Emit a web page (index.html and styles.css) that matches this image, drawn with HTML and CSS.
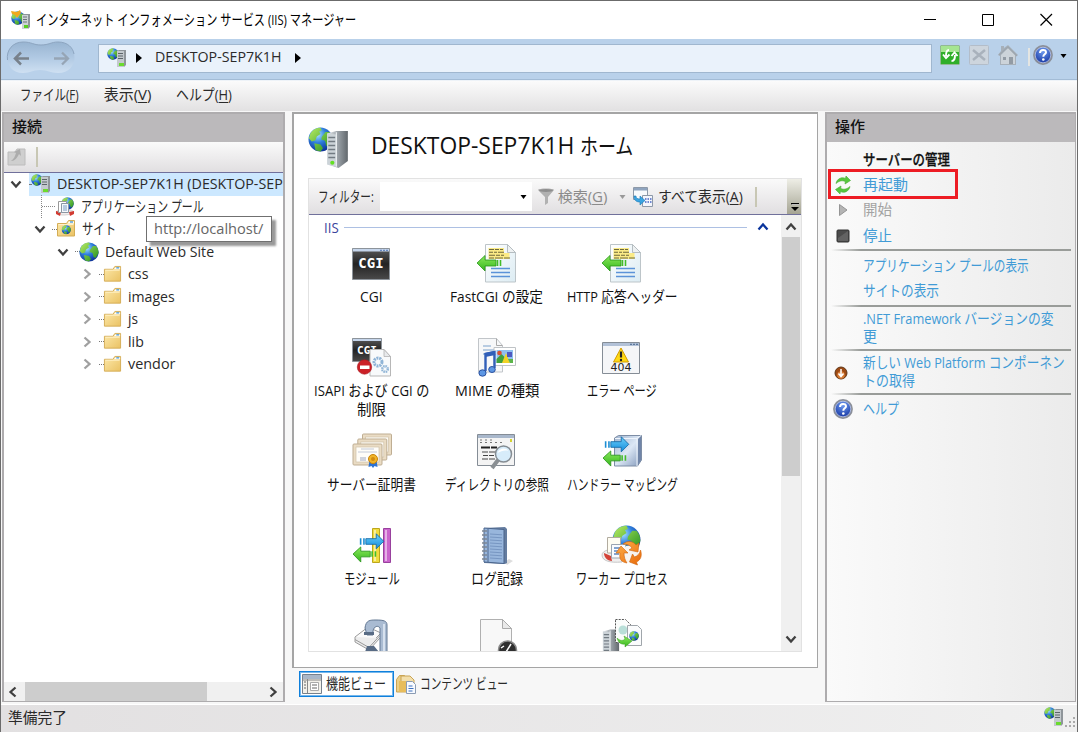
FILE: index.html
```html
<!DOCTYPE html>
<html lang="ja">
<head>
<meta charset="utf-8">
<title>インターネット インフォメーション サービス (IIS) マネージャー</title>
<link rel="stylesheet" href="styles.css">
</head>
<body>
<svg class="defs" width="0" height="0">
  <defs>
    <radialGradient id="sea" cx=".38" cy=".3" r=".75"><stop offset="0" stop-color="#a9e4ff"/><stop offset=".45" stop-color="#2f7fdc"/><stop offset="1" stop-color="#0b2c92"/></radialGradient>
    <linearGradient id="land" x1="0" y1="0" x2="1" y2="1"><stop offset="0" stop-color="#b9ec63"/><stop offset="1" stop-color="#1d8d1d"/></linearGradient>
    <linearGradient id="steel"><stop offset="0" stop-color="#e9edf0"/><stop offset=".5" stop-color="#9ca3a9"/><stop offset="1" stop-color="#62686d"/></linearGradient>
    <linearGradient id="dark" x1="0" y1="0" x2="0" y2="1"><stop offset="0" stop-color="#5a5a5a"/><stop offset=".5" stop-color="#232323"/><stop offset="1" stop-color="#4a4a4a"/></linearGradient>
    <linearGradient id="paper" x1="0" y1="0" x2="1" y2="1"><stop offset="0" stop-color="#fff"/><stop offset="1" stop-color="#dcecf3"/></linearGradient>
    <linearGradient id="fold" x1="0" y1="0" x2="1" y2="1"><stop offset="0" stop-color="#fde9ab"/><stop offset="1" stop-color="#eac263"/></linearGradient>
    <linearGradient id="grn" x1="0" y1="0" x2="0" y2="1"><stop offset="0" stop-color="#8bea5c"/><stop offset="1" stop-color="#35b51d"/></linearGradient>
    <linearGradient id="blu" x1="0" y1="0" x2="0" y2="1"><stop offset="0" stop-color="#6cd0fa"/><stop offset="1" stop-color="#128bdc"/></linearGradient>
    <linearGradient id="cube" x1="0" y1="0" x2="1" y2="1"><stop offset="0" stop-color="#9fb4cf"/><stop offset=".5" stop-color="#dce7f5"/><stop offset="1" stop-color="#8198ba"/></linearGradient>
    <linearGradient id="org" x1="0" y1="0" x2="1" y2="1"><stop offset="0" stop-color="#ffb24a"/><stop offset="1" stop-color="#e8680a"/></linearGradient>
    <radialGradient id="helpfill" cx=".5" cy=".3" r=".7"><stop offset="0" stop-color="#6f9cf0"/><stop offset="1" stop-color="#10309e"/></radialGradient>
    <symbol id="globe" viewBox="0 0 20 20">
      <circle cx="10" cy="10" r="9.6" fill="url(#sea)"/>
      <path d="M2 5C4 2 7 .6 10 .6l1 2-2 1 1 2-3 2-1 3-3 1L.7 9zM11 8l3-4 3 0 2 3 .6 4-3 5-2-1-1-4-3-1zM5 13l5 1 2 3-2 2.5-4-1z" fill="url(#land)"/>
    </symbol>
    <symbol id="tower" viewBox="0 0 20 32">
      <path d="M1 2L9 0h10v26l-8 6-10-3z" fill="url(#steel)"/>
      <path d="M1 2l8 1v28l-8-2z" fill="#ccd3d8"/>
      <path d="M2 5.5h6M2 9h6M2 12.500h6M2 16h6M2 19.500h6M2 23h6" stroke="#727b82" stroke-width="1.300"/>
      <path d="M9 1v30" stroke="#eef1f3"/><circle cx="5.500" cy="27.500" r="1.800" fill="#63e021"/>
    </symbol>
    <symbol id="server" viewBox="0 0 20 20">
      <use href="#globe" x="0" y="0" width="12" height="12"/>
      <path d="M10 3l2-1h7v15l-2 2h-7z" fill="#8f959a"/><path d="M10 3h7v16h-7z" fill="#c3c9cd"/>
      <path d="M11 5.500h5M11 8h5M11 10.500h5" stroke="#5c646a"/><path d="M12 15h5v3h-5z" fill="#6adb2e"/>
    </symbol>
    <symbol id="folder" viewBox="0 0 20 20">
      <path d="M1.500 4.500h9l2-3h6v15.500h-17z" fill="url(#fold)" stroke="#d4ad56"/>
      <path d="M11.500 4.500l1.500-2h5v2z" fill="#fff"/><path d="M14 3h3" stroke="#4d9bd8" stroke-width="1.400"/><path d="M2.500 5.500h15" stroke="#fff1c7"/>
    </symbol>
    <symbol id="help" viewBox="0 0 20 20">
      <circle cx="10" cy="10" r="9" fill="url(#helpfill)" stroke="#8b8f99" stroke-width="1.800"/><circle cx="10" cy="10" r="7.800" fill="none" stroke="#d7ddec" stroke-width=".7"/>
      <path d="M7 8c0-4 6-4 6-.8 0 2.200-2.700 2-2.700 4.500" fill="none" stroke="#fff" stroke-width="2"/><circle cx="10.300" cy="14.500" r="1.300" fill="#fff"/>
    </symbol>
    <symbol id="down" viewBox="0 0 12 12"><path d="M1.500 3.500L6 8.500l4.500-5" fill="none" stroke="currentColor" stroke-width="2.300"/></symbol>
    <symbol id="header-page" viewBox="0 0 40 40">
      <path d="M8.500.5h22l8 8v29.500h-30z" fill="url(#paper)" stroke="#bdc5c9"/><path d="M30.500.5v8h8z" fill="#eef1f2" stroke="#b5bdc1"/>
      <path d="M11.500 4h15.500v5h5.500v6h-21z" fill="#fbeb86"/>
      <path d="M12 5.500h5m1 0h4m1 0h3M12 8.300h4m1 0h3m1 0h6M12 11.200h6m1 0h4m1 0h3M12 14h5m1 0h8m1 0h6" stroke="#6f6a3c" stroke-width="1.100"/>
      <path d="M14 24.500h19M14 28.500h19M14 32.500h19" stroke="#5b93d8" stroke-width="1.400"/>
      <path d="M0 19l8-7.500V16h11v6H8v5z" fill="url(#grn)" stroke="#28951a" stroke-width=".8"/><path d="M20.500 16v6M23.500 16v6" stroke="#43bd28" stroke-width="1.600"/>
    </symbol>
    <symbol id="arrow-blue" viewBox="0 0 28 18"><path d="M8 6h11V.8l8 8-8 8V12H8z" fill="url(#blu)" stroke="#1268a5" stroke-width=".9"/><path d="M2.500 5.500v7M6 5.500v7" stroke="#1c8ed4" stroke-width="1.700"/></symbol>
    <symbol id="arrow-green" viewBox="0 0 28 18"><path d="M.8 8.500L9 1v4.500h10v6H9V17z" fill="url(#grn)" stroke="#28951a" stroke-width=".9"/><path d="M21 5.500v6M24.500 5.500v6" stroke="#43bd28" stroke-width="1.700"/></symbol>
    <symbol id="cert" viewBox="0 0 32 24"><rect x="1" y="1" width="29" height="21" rx="1" fill="#eadcc4" stroke="#bfae93"/><rect x="4" y="4" width="23" height="15" fill="#fffdf8" stroke="#cfc1a8" stroke-width=".7"/></symbol>
  </defs>
</svg>

<div class="window">
  <header class="titlebar">
    <svg class="i20" viewBox="0 0 20 20"><use href="#globe" x="0" y="1" width="14" height="14"/><path d="M0 1l6 1 3-2 1 3-4 5-2-3-3-1z" fill="#f0a91e"/><path d="M11 5l2-1h6v13l-2 2h-6z" fill="#8f959a"/><path d="M11 5h6v14h-6z" fill="#cdd2d5"/><path d="M12 7h4M12 9.500h4M12 12h4" stroke="#6c747a"/><path d="M13 15h4v3h-4z" fill="#58cf23"/></svg>
    <span class="fit caption" data-w="320">インターネット インフォメーション サービス (IIS) マネージャー</span>
    <div class="winbtns">
      <svg viewBox="0 0 58 38"><path d="M23 18.500h12" stroke="#000"/></svg>
      <svg viewBox="0 0 58 38"><path d="M23.500 13.500h11v11h-11z" fill="none" stroke="#000"/></svg>
      <svg viewBox="0 0 58 38"><path d="M23.500 13l11.500 11.500M35 13L23.500 24.500" stroke="#000" stroke-width="1.200"/></svg>
    </div>
  </header>

  <nav class="navbar">
    <svg class="backfwd" viewBox="0 0 70 36">
      <defs><linearGradient id="pill" x1="0" y1="0" x2="0" y2="1"><stop offset="0" stop-color="#98b4d1"/><stop offset=".5" stop-color="#b0c9e3"/><stop offset="1" stop-color="#cfe0f2"/></linearGradient></defs>
      <path d="M17 2c9 0 10 3 18 3S45 2 52 2c22 0 22 31 0 31-8 0-10-3-18-3s-9 3-17 3C-4 33-4 2 17 2z" fill="url(#pill)"/>
      <path d="M1.500 20C0 10 7 2 17 2c9 0 10 3 18 3S45 2 52 2c10 0 15 6 16 12" fill="none" stroke="#8da5c0"/>
      <path d="M23 18.500H9M15 12.500l-6 6 6 6" fill="none" stroke="#78818b" stroke-width="2.500"/>
      <path d="M48 18.500h14M56 12.500l6 6-6 6" fill="none" stroke="#96a5b5" stroke-width="2.300"/>
    </svg>
    <div class="address">
      <svg class="i20"><use href="#server"/></svg>
      <svg class="tri" viewBox="0 0 6 10"><path d="M0 0l6 5-6 5z"/></svg>
      <span class="fit" data-w="126">DESKTOP-SEP7K1H</span>
      <svg class="tri" viewBox="0 0 6 10"><path d="M0 0l6 5-6 5z"/></svg>
    </div>
    <div class="navicons">
      <svg class="i20" viewBox="0 0 20 20"><rect x=".5" y=".5" width="19" height="19" rx="1" fill="#2fae29" stroke="#93b893"/><path d="M1 1h18v6H1z" fill="#a5e591"/><path d="M9 5C6.500 5 6 7 6 11M3 9.500l3 3.500 3.500-3.500M11.500 16c3 0 3.500-2.500 3.500-6M11.500 11l3-3.500 3 3.500" fill="none" stroke="#fff" stroke-width="1.900"/></svg>
      <svg class="i20" viewBox="0 0 20 20"><rect x=".5" y=".5" width="19" height="19" rx="1" fill="#cdd5dd" stroke="#b3bdc9"/><path d="M4 5l12 10M16 5L4 15" stroke="#a9b2bc" stroke-width="2.500"/></svg>
      <svg class="i20" viewBox="0 0 20 20"><path d="M3 6V1h3v2l4-3 10 10-2 1v9H2v-9l-2-1z" fill="#a7b0b9"/><path d="M3 10l7-7 7 7v9H3z" fill="#ccd3d9"/><path d="M1 10l9-8 9 9" fill="none" stroke="#9da6af" stroke-width="1.400"/><path d="M11 12h4v7h-4zM5 12h3v3H5z" fill="#929ba4"/></svg>
      <i class="navsep"></i>
      <svg class="i20"><use href="#help"/></svg>
      <svg class="tri-down" viewBox="0 0 6 4"><path d="M0 0h6L3 4z"/></svg>
    </div>
  </nav>

  <nav class="menubar">
    <span class="fit" data-w="59">ファイル(<u>F</u>)</span><span class="fit" data-w="48">表示(<u>V</u>)</span><span class="fit" data-w="56">ヘルプ(<u>H</u>)</span>
  </nav>

  <main class="body">
    <section class="pane connections">
      <h2 class="pane-head"><span class="fit" data-w="30">接続</span></h2>
      <div class="tree-tools">
        <svg class="i20" viewBox="0 0 20 20"><path d="M1 5h7l2-3h8v16H1z" fill="#cfcfcf" stroke="#bcbcbc"/><path d="M4 14c3-2 4-5 5-8L7 5l6-3 1 7-2-2c-2 4-4 7-8 7z" fill="#acacac"/></svg>
        <i class="toolsep"></i>
      </div>
      <div class="tree">
        <div class="row l0"><svg class="chev"><use href="#down"/></svg><div class="sel"><i class="dots"></i><svg class="i20"><use href="#server"/></svg><span class="fit" data-w="226">DESKTOP-SEP7K1H (DESKTOP-SEP</span></div></div>
        <div class="row l1 pool"><i class="elbow"></i><svg class="i20" viewBox="0 0 20 20"><use href="#globe" x="6" y="0" width="13" height="13"/><path d="M1 15c0-3 18-3 18 0s-18 5-18 0z" fill="#f2eeee" stroke="#bbb" stroke-width=".6"/><path d="M1 14l5 1-1 4-4-2zM19 14l-5 1 1 4 4-2z" fill="#d13b32"/><path d="M3.500 4.500h8v11h-8z" fill="#fff" stroke="#999"/><path d="M6.500 6.500h7v9h-7z" fill="#f5f8fb" stroke="#8b97a4"/><path d="M8 9h4M8 11h4M8 13h4" stroke="#5b86b8" stroke-width=".8"/></svg><span class="fit" data-w="123">アプリケーション プール</span></div>
        <div class="row l1"><svg class="chev"><use href="#down"/></svg><i class="dots"></i><svg class="i20" viewBox="0 0 20 20"><use href="#folder" width="20" height="20"/><use href="#globe" x="5.500" y="6" width="9.500" height="9.500"/></svg><span class="fit" data-w="34">サイト</span></div>
        <div class="row l2"><svg class="chev"><use href="#down"/></svg><i class="dots"></i><svg class="i20"><use href="#globe"/></svg><span class="fit" data-w="109">Default Web Site</span></div>
        <div class="row l3"><svg class="chev shut"><use href="#down"/></svg><i class="dots"></i><svg class="i20"><use href="#folder"/></svg><span class="fit" data-w="20">css</span></div>
        <div class="row l3"><svg class="chev shut"><use href="#down"/></svg><i class="dots"></i><svg class="i20"><use href="#folder"/></svg><span class="fit" data-w="47">images</span></div>
        <div class="row l3"><svg class="chev shut"><use href="#down"/></svg><i class="dots"></i><svg class="i20"><use href="#folder"/></svg><span class="fit" data-w="10">js</span></div>
        <div class="row l3"><svg class="chev shut"><use href="#down"/></svg><i class="dots"></i><svg class="i20"><use href="#folder"/></svg><span class="fit" data-w="16">lib</span></div>
        <div class="row l3"><svg class="chev shut"><use href="#down"/></svg><i class="dots"></i><svg class="i20"><use href="#folder"/></svg><span class="fit" data-w="47">vendor</span></div>
        <div class="tooltip"><span class="fit" data-w="109">http://localhost/</span></div>
      </div>
      <div class="hscroll"><svg class="chev left"><use href="#down"/></svg><i class="hthumb"></i><svg class="chev right"><use href="#down"/></svg></div>
    </section>

    <section class="center">
      <div class="home">
        <div class="home-head">
          <svg class="home-icon" viewBox="0 0 42 42"><use href="#globe" x="0" y="0" width="25" height="25"/><use href="#tower" x="18" y="4" width="23" height="37" preserveAspectRatio="none"/></svg>
          <h1><span class="fit" data-w="203">DESKTOP-SEP7K1H</span> <span class="fit kana" data-w="53">ホーム</span></h1>
        </div>
        <div class="feature">
          <div class="filter">
            <span class="fit" data-w="56">フィルター:</span>
            <div class="combo"><svg class="tri-down" viewBox="0 0 6 4"><path d="M0 0h6L3 4z"/></svg></div>
            <svg class="funnel" viewBox="0 0 18 18"><path d="M1 2c0-2 16-2 16 0l-6 7v6l-3 2V9z" fill="#b1b1b1"/><ellipse cx="9" cy="2.500" rx="7" ry="1.500" fill="#8e8e8e"/></svg>
            <span class="fit muted" data-w="50">検索(<u>G</u>)</span>
            <svg class="tri-down pale" viewBox="0 0 6 4"><path d="M0 0h6L3 4z"/></svg>
            <svg class="i20" viewBox="0 0 20 20"><path d="M.5.500h14v12H.5z" fill="#f8fafc" stroke="#8d99a8"/><path d="M1 1h13v2.500H1z" fill="#8fa4be"/><path d="M9.500 8.500h10v11h-10z" fill="#f4f6fc" stroke="#8d99a8"/><path d="M12 12h1.500m1 0h1.500m1 0h1.500M12 15h1.500m1 0h1.500m1 0h1.500" stroke="#4565c4" stroke-width="1.500"/><path d="M1 9c0 4 2 6 6 6v3l5-4.500L7 9v3c-3 0-4-1-4-3z" fill="#3aa4e2" stroke="#1b78b4" stroke-width=".6"/></svg>
            <span class="fit" data-w="85">すべて表示(<u>A</u>)</span>
            <i class="toolsep"></i>
            <div class="overflow"><svg viewBox="0 0 8 8"><path d="M1 1.500h7" stroke="#fff"/><path d="M0 0h8v1.300H0zM0 4h8L4 8z"/></svg></div>
          </div>
          <div class="listwrap">
            <div class="list">
              <div class="group"><span class="fit" data-w="15">IIS</span><i></i><svg class="chev up"><use href="#down"/></svg></div>
              <div class="grid">
                <div class="item"><svg class="i40" viewBox="0 0 40 40"><path d="M.5 4.500h37v31H.5z" fill="url(#dark)" stroke="#8d949b"/><path d="M1 5h36v2.500H1z" fill="#c5d5eb"/><path d="M28 6.300h2m1 0h2m1 0h2" stroke="#5276b5"/><text class="cgi" x="19" y="24" text-anchor="middle">CGI</text></svg><span class="fit" data-w="23">CGI</span></div>
                <div class="item"><svg class="i40"><use href="#header-page"/></svg><span class="fit" data-w="93">FastCGI の設定</span></div>
                <div class="item"><svg class="i40"><use href="#header-page"/></svg><span class="fit" data-w="111">HTTP 応答ヘッダー</span></div>
                <div class="item"><svg class="i40" viewBox="0 0 40 40"><path d="M.5.500h29v23H.5z" fill="url(#dark)" stroke="#8d949b"/><path d="M1 1h28v2H1z" fill="#c5d5eb"/><text class="cgi small" x="15" y="16" text-anchor="middle">CGI</text><path d="M18 11.500h14l6.500 7V38H18z" fill="#f8fafb" stroke="#b7b7b7"/><path d="M32 11.500v7h6.500z" fill="#e8eaec" stroke="#aaa" stroke-width=".7"/><circle cx="26" cy="24" r="4" fill="none" stroke="#8fb4d6" stroke-width="3" stroke-dasharray="2 .8"/><circle cx="33" cy="31" r="2.800" fill="none" stroke="#8fb4d6" stroke-width="2.400" stroke-dasharray="1.500 .7"/><circle cx="12.500" cy="29" r="7.200" fill="#cb2027" stroke="#a8161c" stroke-width=".6"/><path d="M8 27.500h9.500v3.500H8z" fill="#fff"/></svg><span class="fit" data-w="115">ISAPI および CGI の</span><span class="fit" data-w="29">制限</span></div>
                <div class="item"><svg class="i40" viewBox="0 0 40 40"><path d="M1.500.500h18l6 7V34h-24z" fill="#f7f8f9" stroke="#c1c5c9"/><path d="M19.500.500v7h6" fill="none" stroke="#aaa"/><path d="M6 8h8M6 12h11M6 16h9" stroke="#7b9fcb" stroke-width="1.200"/><path d="M17 9.500h21.500v18H17z" fill="#fff" stroke="#bfc3c6"/><path d="M19.500 12h16.500v13h-16.500z" fill="#8fc0f0"/><path d="M19.500 25v-4l5-5 3 3 2 6z" fill="#3f9f3d"/><path d="M25 25l4-10 4 10z" fill="#f1d327"/><circle cx="22.500" cy="15" r="2.300" fill="#d95134"/><path d="M30 14h5v5h-5z" fill="#4f59c0"/><path d="M33 25l-2-4h5v4z" fill="#5bb54a"/><path d="M8.500 33V16l9-2v16" fill="none" stroke="#315fb9" stroke-width="2.400"/><path d="M8 17l10-2" stroke="#315fb9" stroke-width="4"/><ellipse cx="5.500" cy="35" rx="3.600" ry="3.200" fill="#5d97e4" stroke="#2c52a0"/><ellipse cx="15" cy="31.500" rx="3.300" ry="3" fill="#5d97e4" stroke="#2c52a0"/></svg><span class="fit" data-w="84">MIME の種類</span></div>
                <div class="item"><svg class="i40" viewBox="0 0 40 40"><path d="M.5 4.500h37v31H.5z" fill="#f5f6f8" stroke="#858d96"/><path d="M1 5h36v3H1z" fill="#b2c1d7"/><path d="M28 6.300h2m1 0h2m1 0h2" stroke="#49688f"/><path d="M19 10l7.500 14h-15z" fill="#ffd914" stroke="#d39c00" stroke-linejoin="round"/><path d="M19 13.500v6" stroke="#222" stroke-width="2.200"/><circle cx="19" cy="22" r="1.200" fill="#222"/><text class="code" x="19" y="33" text-anchor="middle">404</text></svg><span class="fit" data-w="70">エラー ページ</span></div>
                <div class="item"><svg class="i40" viewBox="0 0 40 40"><use href="#cert" x="9.500" y="1" width="32" height="24"/><use href="#cert" x="4.800" y="6" width="32" height="24"/><use href="#cert" x="0" y="11" width="32" height="24"/><path d="M9 17h13M6 20h19" stroke="#c3cad8"/><path d="M8 25h6v4H8z" fill="#cfd2dc"/><path d="M17.500 28l-1 7 3-1 1.500 2 1.500-2 3 1-1-7z" fill="#2c72d3"/><circle cx="21" cy="27" r="4.500" fill="#f0b429" stroke="#c98308"/><circle cx="21" cy="27" r="2" fill="#d28b10"/></svg><span class="fit" data-w="89">サーバー証明書</span></div>
                <div class="item"><svg class="i40" viewBox="0 0 40 40"><path d="M.5 2.500h37v31H.5z" fill="#f4f4f4" stroke="#858d96"/><path d="M1 3h36v3H1z" fill="#a9b8cc"/><path d="M3 8h13M3 10.500h22" stroke="#777" stroke-dasharray="2 3"/><path d="M33 7h2v3h-2z" fill="#d4d432"/><path d="M4 15.500h9m1 0h6" stroke="#222" stroke-width="1.800"/><path d="M5 20h6m1 0h6M6 23.500h5m1 0h5M5 27h6m1 0h6" stroke="#444"/><path d="M21 28l-6 8" stroke="#8a8f93" stroke-width="4"/><circle cx="26.500" cy="22" r="8" fill="#d5ebfa" fill-opacity=".95" stroke="#858c92" stroke-width="1.500"/><path d="M20.500 21c2-5 8-6 11-2-4-1-7 0-11 2z" fill="#fff"/></svg><span class="fit" data-w="104">ディレクトリの参照</span></div>
                <div class="item"><svg class="i40" viewBox="0 0 40 40"><path d="M12.500 6l4-2.500h23V28l-4 6h-23z" fill="url(#cube)" stroke="#7d8da5"/><path d="M13 6.500h22V34M35 6.500l4-3" fill="none" stroke="#eef4fc"/><path d="M36 7l3-3v24l-3 5z" fill="#7085a8"/><use href="#arrow-blue" x="1" y="4" width="27" height="17"/><use href="#arrow-green" x="0" y="18" width="27" height="17"/></svg><span class="fit" data-w="111">ハンドラー マッピング</span></div>
                <div class="item"><svg class="i40" viewBox="0 0 40 40"><path d="M20.500 2.500h7v34h-7z" fill="#f0dc3e" stroke="#bda61c"/><path d="M31.500 2.500h7v34h-7z" fill="#ca63cc" stroke="#98419d"/><path d="M23 4v31M34 4v31" stroke="#fff" stroke-opacity=".5" stroke-width="2"/><use href="#arrow-blue" x="6" y="7" width="27" height="17"/><use href="#arrow-green" x="0" y="20" width="27" height="17"/></svg><span class="fit" data-w="56">モジュール</span></div>
                <div class="item"><svg class="i40" viewBox="0 0 40 40"><path d="M28 36l4-3 4 2-6 4z" fill="#ddd"/><path d="M7 2l21-1 2 2V37l-2 1L7 37z" fill="#647c9f"/><path d="M7 2l20 1.500v34L7 36z" fill="#98b6dc" stroke="#4b658c"/><path d="M13 8l12 .8M13 11l12 .8M13 14l12 .8M13 17l12 .8M13 20l12 .8M13 23l12 .8M13 26l12 .8M13 29l12 .8M13 32l12 .8" stroke="#7796c2"/><path d="M11 3v33" stroke="#4f6990"/><path d="M5 5h5M5 9h5M5 13h5M5 17h5M5 21h5M5 25h5M5 29h5M5 33h5" stroke="#7c8794" stroke-width="1.700"/></svg><span class="fit" data-w="52">ログ記録</span></div>
                <div class="item"><svg class="i40" viewBox="0 0 40 40"><use href="#globe" x="10" y="-1" width="29" height="29"/><path d="M0 29c0-5 10-7 20-6v13C8 37 0 35 0 29z" fill="#f0eeee" stroke="#bbb" stroke-width=".8"/><path d="M2 27l7 3 1 5c-5 0-8-4-8-8z" fill="#d34237"/><path d="M5.500 11.500h13V27h-13z" fill="#fffdf2" stroke="#b2aca0"/><path d="M9.500 18.500h14V32h-14z" fill="#fafcff" stroke="#9ba5b0"/><path d="M12 22h6M12 25h5M12 28h5" stroke="#5e86be" stroke-width="1.300"/><circle cx="27.500" cy="28" r="8.500" fill="#f7f4f0"/><path d="M21 18c5-4 10-3 13 1l3-2-1 9-9-2 3-2c-2-3-5-4-9-4zM38.500 24c2 6 0 10-4 12l1 3-8-3 3-8 2 3c3-1 5-3 6-7zM25 37c-6-1-8-4-7-10h-4l5-7 7 7h-4c0 4 1 7 3 10z" fill="url(#org)" stroke="#cf650f" stroke-width=".6"/></svg><span class="fit" data-w="92">ワーカー プロセス</span></div>
                <div class="item"><svg class="i40" viewBox="0 0 40 40"><path d="M3 17l13-10 13 6-13 13z" fill="#fafafa" stroke="#9a9a9a"/><path d="M3 17v5l14 8 11-12" fill="#ececec" stroke="#9a9a9a"/><path d="M3 19.500l14 8 11-12" fill="none" stroke="#999"/><path d="M13 8c1-8 5-8 11-8 8 0 11 1 11 5v35h-7V8c-2-3-6-2-7 3v4h-6z" fill="#a9bbd2" stroke="#637893"/><path d="M32 4v36" stroke="#e6eef7" stroke-width="1.500"/><path d="M12 12h10v3H12zM15 26h7l5 6H13z" fill="#586b84"/></svg></div>
                <div class="item"><svg class="i40" viewBox="0 0 40 40"><path d="M3.500-.5h22l9 9V40h-31z" fill="#f8f8f8" stroke="#b0b0b0"/><path d="M25.500-.5v9h9z" fill="#e9e9e9" stroke="#aaa"/><circle cx="30.500" cy="30" r="9" fill="#2f2f2f" stroke="#8c8c8c" stroke-width="1.500"/><path d="M29 32l5-8M24 28l3-2" stroke="#fff" stroke-width="1.500"/></svg></div>
                <div class="item"><svg class="i40" viewBox="0 0 40 40"><use href="#tower" x="0" y="9" width="18" height="30" preserveAspectRatio="none"/><path d="M13.500-.500h10l5 5v18h-15z" fill="#fafcfb" stroke="#555" stroke-dasharray="2 1.200"/><circle cx="21" cy="10" r="4.500" fill="#b9dfd8"/><path d="M25.500 5.500h10l4 4v16h-14z" fill="#fbfcfd" stroke="#a0a6ab"/><use href="#globe" x="27" y="11" width="10" height="10"/><path d="M15 18c3 3 6 3 8 1l-1-3 8 5-7 6v-3c-4 1-7-2-8-6z" fill="url(#grn)" stroke="#399b20" stroke-width=".5"/></svg></div>
              </div>
            </div>
            <div class="vscroll"><svg class="chev flip"><use href="#down"/></svg><i class="vthumb"></i><svg class="chev"><use href="#down"/></svg></div>
          </div>
        </div>
      </div>
      <div class="tabs">
        <div class="tab on"><svg class="i20" viewBox="0 0 20 20"><path d="M.5.500h19v19H.5z" fill="#f3f1ea" stroke="#77818c"/><path d="M1 1h18v4H1z" fill="#a9b7c8"/><path d="M5.500 5v14M1 6h18" stroke="#888"/><path d="M8.500 8.500h8v8h-8z" fill="#fff" stroke="#aaa"/><path d="M2 8h2M2 11h2M2 14h2M10 11h5M10 14h5" stroke="#666"/></svg><span class="fit" data-w="60">機能ビュー</span></div>
        <div class="tab"><svg class="i20" viewBox="0 0 20 20"><path d="M.5 5.500l3-4h5l1 3h7V18H.5z" fill="#eccf86" stroke="#c9a455"/><path d="M5 2h9l4 4v5H5z" fill="#f3dfab" stroke="#c9a455"/><path d="M3 7h9v11H3z" fill="#e8bd5b"/><path d="M10.500 7.500h6l3 3v9h-9z" fill="#f9fbff" stroke="#8b9cb4"/><path d="M12.500 12h4M12.500 14.500h5M12.500 17h4" stroke="#3d71bf"/></svg><span class="fit" data-w="88">コンテンツ ビュー</span></div>
      </div>
    </section>

    <section class="pane actions">
      <h2 class="pane-head"><span class="fit" data-w="30">操作</span></h2>
      <div class="act-list">
        <div class="act title"><span class="fit" data-w="87">サーバーの管理</span></div>
        <div class="act"><svg class="i20" viewBox="0 0 20 20"><path d="M3 8.500c1-5 6-7 9.500-5L13 1l4.500 4.500L12 9l.3-2.500C9 5 6 6 3 8.500zM17 11.500c-1 5-6 7-9.500 5L7 19l-4.500-4.500L8 11l-.3 2.500c3.300 1.500 6.300.5 9.300-2z" fill="#57c83e" stroke="#48aa35" stroke-width=".6"/></svg><span class="fit" data-w="45">再起動</span></div>
        <div class="act off"><svg class="i20" viewBox="0 0 20 20"><path d="M6.500 4.500l7.500 5.500-7.500 5.500z" fill="#b4b4b4" stroke="#959595"/></svg><span class="fit" data-w="29">開始</span></div>
        <div class="act"><svg class="i20" viewBox="0 0 20 20"><rect x="4" y="4" width="12" height="12" rx="1" fill="#4b4b4b" stroke="#333"/><path d="M5 12L15 5v10H5z" fill="#626262"/></svg><span class="fit" data-w="29">停止</span></div>
        <hr>
        <div class="act"><span class="fit" data-w="166">アプリケーション プールの表示</span></div>
        <div class="act"><span class="fit" data-w="76">サイトの表示</span></div>
        <hr>
        <div class="act two"><div><span class="fit" data-w="191">.NET Framework バージョンの変</span><span class="fit" data-w="14">更</span></div></div>
        <hr>
        <div class="act two"><svg class="i20" viewBox="0 0 20 20"><circle cx="8" cy="10" r="6" fill="#9c4a14" stroke="#5f3415"/><circle cx="8" cy="12" r="3.800" fill="#d77b34"/><path d="M8 6v7M5.500 10.500L8 13.500l2.500-3" fill="none" stroke="#fff" stroke-width="1.500"/></svg><div><span class="fit" data-w="202">新しい Web Platform コンポーネン</span><span class="fit" data-w="52">トの取得</span></div></div>
        <hr>
        <div class="act"><svg class="i20"><use href="#help"/></svg><span class="fit" data-w="36">ヘルプ</span></div>
        <div class="highlight"></div>
      </div>
    </section>
  </main>

  <footer class="status">
    <span class="fit" data-w="59">準備完了</span>
    <div class="status-right"><svg class="i20"><use href="#server"/></svg><svg class="grip" viewBox="0 0 12 12"><path d="M9 1h2v2H9zM5 5h2v2H5zM9 5h2v2H9zM1 9h2v2H1zM5 9h2v2H5zM9 9h2v2H9z" fill="#aaa"/></svg></div>
  </footer>
</div>
<script src="script.js"></script>
</body>
</html>
```
FILE: styles.css
```css
* { box-sizing: border-box; }
body {
  margin: 0;
  font: 15px/18px "Open Sans", "Noto Sans CJK JP", sans-serif;
  color: #2a2a2a;
  overflow: hidden;
}
svg { display: block; flex: none; }
h1, h2 { margin: 0; font-weight: 400; }
u { text-underline-offset: 2px; text-decoration-thickness: 1px; }
i { display: block; flex: none; }
.defs { position: absolute; }
.fit { display: inline-block; flex: none; white-space: nowrap; transform-origin: 0 50%; translate: 0 -1px; }
.i20 { width: 20px; height: 20px; }
.i40 { width: 40px; height: 40px; overflow: visible; }
.chev { width: 12px; height: 12px; color: #404040; }

.window {
  width: 1078px;
  height: 732px;
  display: flex;
  flex-direction: column;
  background: #f7f7f7;
  border: 1px solid #6b6b6b;
  border-bottom: 0;
}

/* title bar */
.titlebar { height: 38px; display: flex; align-items: center; padding-left: 10px; background: #fff; color: #000; }
.caption { margin-left: 5px; }
.winbtns { display: flex; margin-left: auto; margin-right: 2px; }
.winbtns svg { width: 58px; height: 38px; }
.titlebar .fit { line-height: 20px; }

/* address bar */
.navbar { height: 41px; display: flex; padding-left: 5px; background: #b9d1ea; border-bottom: 1px solid #a3bcd6; }
.backfwd { width: 70px; height: 36px; margin-top: 1px; }
.address {
  width: 834px; height: 29px; margin: 5px 0 0 22px; padding-left: 8px;
  display: flex; align-items: center;
  background: #eaf2fb; border: 1px solid #a0b7cf;
}
.address .fit { margin-left: 13px; line-height: 16px; padding-bottom: 3px; }
.address .i20 { margin-bottom: 2px; }
.tri { width: 6px; height: 10px; margin-left: 9px; }
.address .tri { margin-bottom: 1px; }
.address .fit + .tri { margin-left: 14px; }
.navicons { display: flex; padding: 6px 0 0 8px; gap: 9px; }
.navsep { width: 2px; height: 18px; margin: 3px -6px 0 1px; background: #e4e5e2; }
.tri-down { width: 7px; height: 4px; margin-top: 9px; }
.navicons .tri-down { margin-left: -2px; }

/* menu */
.menubar {
  height: 31px; display: flex; align-items: center; gap: 25px; padding: 0 0 2px 19px;
  background: linear-gradient(#fbfbfb, #e2e1e2);
  border-top: 1px solid #eef3f8;
}

/* body */
.body { height: 593px; display: flex; padding: 1px 0 0 1px; }
.pane { display: flex; flex-direction: column; border: 2px solid #aeacae; border-width: 2px 1px 1px 2px; }
.pane-head { height: 28px; flex: none; padding: 4px 0 0 8px; background: #bbb9bb; color: #111; font-size: 15px; line-height: 18px; font-weight: 500; }
.connections { width: 283px; height: 590px; background: #fff; border-right-width: 2px; }
.tree-tools {
  height: 31px; flex: none; display: flex; align-items: center; gap: 9px; padding-left: 3px;
  background: linear-gradient(#fafafa, #e1dfe1); border-bottom: 1px solid #70709b;
}
.toolsep { width: 2px; height: 20px; background: #c8c7b4; }
.tree { position: relative; flex: 1; overflow: hidden; }
.row { height: 22.5px; display: flex; align-items: center; }
.row .chev { margin: 0 9px 0 6px; }
.row .fit { margin-left: 6px; line-height: 20px; }
.l1 { padding-left: 24px; }
.l2 { padding-left: 47px; }
.l3 { padding-left: 71px; }
.l3 .i20 { width: 19px; height: 19px; margin-right: 0; }
.row.l3 .fit { margin-left: 6px; }
.sel { flex: 1; height: 22.5px; display: flex; align-items: center; overflow: hidden; background: #cce8ff; margin-left: -2px; }
.dots { width: 5px; height: 1px; margin-right: -1px; margin-left: -3px; border-top: 1px dotted #777; }
.sel .dots { margin: 0; width: 2px; }
.pool { padding-left: 37px; }
.elbow { width: 14px; height: 23px; border-left: 1px dotted #888; background: repeating-linear-gradient(90deg, #888 0 1px, transparent 1px 2px) 0 50% / 100% 1px no-repeat; }
.shut { color: #a0a0a0; transform: rotate(-90deg); }
.tooltip {
  position: absolute; left: 142px; top: 43px; width: 126px; height: 26px; padding: 3px 0 0 7px;
  background: #fff; border: 1px solid #707070; color: #666; box-shadow: 4px 4px 2px #999;
}
.hscroll { height: 19px; flex: none; display: flex; align-items: center; background: #f0f0f0; }
.hthumb { width: 182px; height: 19px; margin-left: 6px; background: #cdcdcd; }
.left { margin-left: 3px; transform: rotate(90deg); }
.right { margin-left: auto; margin-right: 4px; transform: rotate(-90deg); }

/* features */
.center { width: 526px; margin: 0 7px; }
.home { height: 556px; padding: 13px 14px 0 14px; background: #fff; border: 2px solid #a5a5a5; border-width: 2px 1px 1px 2px; }
.home-head { display: flex; height: 51px; }
.home-icon { width: 42px; height: 42px; }
.home h1 { display: flex; gap: 6px; margin-left: 21px; font-size: 24px; line-height: 38px; color: #111; }
.kana { font-size: 22px; }
.feature { width: 494px; height: 474px; border: 1px solid #e2e2e2; display: flex; flex-direction: column; }
.filter {
  height: 36px; flex: none; display: flex; align-items: center; padding-left: 9px;
  background: linear-gradient(#fafafa, #e1dfe1); border-bottom: 1px solid #70709b;
}
.filter .tri-down { margin-top: 0; }
.combo { width: 152px; height: 29px; margin-left: 6px; display: flex; align-items: center; justify-content: flex-end; padding-right: 5px; background: #fff; }
.funnel { width: 18px; height: 18px; margin: 0 3px 0 5px; }
.muted { color: #8b8b8b; }
.pale { margin: 0 7px 0 12px; fill: #999; }
.filter .i20 + .fit { margin-left: 5px; }
.filter .toolsep { margin-left: 12px; }
.overflow { width: 14px; height: 35px; margin-left: auto; padding: 24px 0 0 4px; background: linear-gradient(#eeeee6, #a5a493); }
.overflow svg { width: 8px; height: 8px; }
.listwrap { flex: 1; min-height: 0; display: flex; }
.list { width: 472px; flex: none; overflow: hidden; }
.group { height: 26px; display: flex; align-items: center; padding-left: 15px; color: #39439c; }
.group i { width: 403px; height: 1px; margin-left: 5px; background: #adc0e3; }
.group i, .up { margin-bottom: 2px; }
.up { margin-left: 10px; color: #0a349c; transform: rotate(180deg); }
.flip { transform: rotate(180deg); }
.grid { display: grid; grid-template-columns: repeat(3, 125.3px); grid-auto-rows: 94px; padding-top: 3px; }
.item { display: flex; flex-direction: column; align-items: center; color: #111; }
.item .i40 { margin-bottom: 4px; }
.item .fit { line-height: 19px; }
.cgi { font: bold 14px "DejaVu Sans Mono", monospace; fill: #fff; }
.small { font-size: 11px; }
.code { font: 11px "DejaVu Sans", sans-serif; fill: #222; }
.vscroll { width: 20px; display: flex; flex-direction: column; align-items: center; background: #f0f0f0; padding: 6px 0; }
.vthumb { width: 18px; height: 239px; margin: 4px 0 auto; background: #cdcdcd; }

.tabs { display: flex; margin: 3px 0 0 7px; gap: 2px; }
.tab { height: 26px; display: flex; align-items: center; gap: 4px; }
.tab.on { width: 95px; padding-left: 2px; background: #fff; border: 1px solid #0f80dc; outline: 1px solid #75b7ec; outline-offset: -2px; }

/* actions */
.actions { width: 251px; height: 590px; background: linear-gradient(90deg, #fafafa, #ebebeb); }
.act-list { position: relative; padding-top: 5px; color: #419bd6; }
.act { height: 25.3px; display: flex; align-items: center; padding-left: 36px; }
.act .i20 { margin: 0 10px 0 -30px; }
.title { color: #111; font-weight: 500; -webkit-text-stroke: .3px #111; }
.off { color: #a3a3a3; }
.two { height: 39px; padding-top: 1px; align-items: flex-start; }
.two .i20 { align-self: center; }
.two .fit { display: block; width: max-content; line-height: 18px; }
hr { height: 2px; margin: 1px 4px 2px 4px; border: 0; background: linear-gradient(90deg, transparent, #999c99 30px); }
.highlight { position: absolute; left: 1px; top: 27px; width: 130px; height: 30px; border: 3px solid #ed1c24; }

/* status */
.status { flex: 1; display: flex; align-items: center; padding: 0 0 2px 7px; border-top: 1px solid #fff; background: linear-gradient(90deg, #e2e0e1, #f0f0f0); }
.status-right { display: flex; margin-left: auto; margin-right: 1px; }
.grip { width: 12px; height: 12px; margin-top: 9px; }
```
FILE: script.js
```js
document.querySelectorAll(".fit").forEach(function (el) {
  var natural = el.offsetWidth;
  var target = Number(el.dataset.w);
  el.style.transform = "scaleX(" + target / natural + ")";
  el.style.marginRight = target - natural + "px";
});
```
